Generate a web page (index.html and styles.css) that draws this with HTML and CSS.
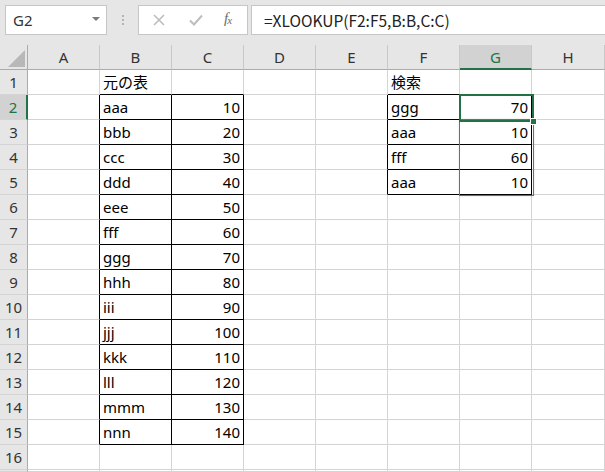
FILE: index.html
```html
<!DOCTYPE html>
<html lang="ja">
<head>
<meta charset="utf-8">
<link rel="stylesheet" href="styles.css">
</head>
<body>
<div class="app">
  <div class="toolbar">
    <div class="namebox"><span class="nb-text">G2</span><span class="nb-arrow"></span></div>
    <div class="dots"><i></i><i></i><i></i></div>
    <div class="btns">
      <svg class="ico-x" width="12" height="12" viewBox="0 0 12 12"><path d="M1 1L11 11M11 1L1 11" stroke="#bdbdbd" stroke-width="1.6" fill="none"/></svg>
      <svg class="ico-ok" width="14" height="12" viewBox="0 0 14 12"><path d="M1 6.5L5 10.5L13 1.5" stroke="#bdbdbd" stroke-width="2" fill="none"/></svg>
      <span class="fx">f<sub>x</sub></span>
    </div>
    <div class="formula">=XLOOKUP(F2:F5,B:B,C:C)</div>
  </div>
  <div class="sheet">
    <div class="grid">
      <div class="ch corner"></div><div class="ch">A</div><div class="ch">B</div><div class="ch">C</div><div class="ch">D</div><div class="ch">E</div><div class="ch">F</div><div class="ch sel">G</div><div class="ch">H</div>

      <div class="rh">1</div><div class="c"></div><div class="c kb">元の表</div><div class="c kb"></div><div class="c"></div><div class="c"></div><div class="c kb">検索</div><div class="c kb"></div><div class="c"></div>
      <div class="rh sel">2</div><div class="c kr"></div><div class="c k">aaa</div><div class="c k n">10</div><div class="c"></div><div class="c kr"></div><div class="c k">ggg</div><div class="c k n">70</div><div class="c"></div>
      <div class="rh">3</div><div class="c kr"></div><div class="c k">bbb</div><div class="c k n">20</div><div class="c"></div><div class="c kr"></div><div class="c k">aaa</div><div class="c k n">10</div><div class="c"></div>
      <div class="rh">4</div><div class="c kr"></div><div class="c k">ccc</div><div class="c k n">30</div><div class="c"></div><div class="c kr"></div><div class="c k">fff</div><div class="c k n">60</div><div class="c"></div>
      <div class="rh">5</div><div class="c kr"></div><div class="c k">ddd</div><div class="c k n">40</div><div class="c"></div><div class="c kr"></div><div class="c k">aaa</div><div class="c k n">10</div><div class="c"></div>
      <div class="rh">6</div><div class="c kr"></div><div class="c k">eee</div><div class="c k n">50</div><div class="c"></div><div class="c"></div><div class="c"></div><div class="c"></div><div class="c"></div>
      <div class="rh">7</div><div class="c kr"></div><div class="c k">fff</div><div class="c k n">60</div><div class="c"></div><div class="c"></div><div class="c"></div><div class="c"></div><div class="c"></div>
      <div class="rh">8</div><div class="c kr"></div><div class="c k">ggg</div><div class="c k n">70</div><div class="c"></div><div class="c"></div><div class="c"></div><div class="c"></div><div class="c"></div>
      <div class="rh">9</div><div class="c kr"></div><div class="c k">hhh</div><div class="c k n">80</div><div class="c"></div><div class="c"></div><div class="c"></div><div class="c"></div><div class="c"></div>
      <div class="rh">10</div><div class="c kr"></div><div class="c k">iii</div><div class="c k n">90</div><div class="c"></div><div class="c"></div><div class="c"></div><div class="c"></div><div class="c"></div>
      <div class="rh">11</div><div class="c kr"></div><div class="c k">jjj</div><div class="c k n">100</div><div class="c"></div><div class="c"></div><div class="c"></div><div class="c"></div><div class="c"></div>
      <div class="rh">12</div><div class="c kr"></div><div class="c k">kkk</div><div class="c k n">110</div><div class="c"></div><div class="c"></div><div class="c"></div><div class="c"></div><div class="c"></div>
      <div class="rh">13</div><div class="c kr"></div><div class="c k">lll</div><div class="c k n">120</div><div class="c"></div><div class="c"></div><div class="c"></div><div class="c"></div><div class="c"></div>
      <div class="rh">14</div><div class="c kr"></div><div class="c k">mmm</div><div class="c k n">130</div><div class="c"></div><div class="c"></div><div class="c"></div><div class="c"></div><div class="c"></div>
      <div class="rh">15</div><div class="c kr"></div><div class="c k">nnn</div><div class="c k n">140</div><div class="c"></div><div class="c"></div><div class="c"></div><div class="c"></div><div class="c"></div>
      <div class="rh">16</div><div class="c"></div><div class="c"></div><div class="c"></div><div class="c"></div><div class="c"></div><div class="c"></div><div class="c"></div><div class="c"></div>
      <div class="rh"></div><div class="c"></div><div class="c"></div><div class="c"></div><div class="c"></div><div class="c"></div><div class="c"></div><div class="c"></div><div class="c"></div>
    </div>
    <div class="range"></div>
    <div class="active"></div>
    <div class="handle"></div>
  </div>
</div>
</body>
</html>
```
FILE: styles.css
```css
html, body {
  margin: 0;
  padding: 0;
  background: #e6e6e6;
  overflow: hidden;
}
.app {
  width: 605px;
  height: 472px;
  font-family: "Noto Sans", "Noto Sans CJK JP", sans-serif;
  color: #000;
}
.toolbar {
  height: 45px;
  box-sizing: border-box;
  padding: 5px 0 0 5px;
  display: flex;
  align-items: flex-start;
  background: #e6e6e6;
}
.namebox {
  width: 102px;
  height: 30px;
  box-sizing: border-box;
  background: #fff;
  border: 1px solid #c6c6c6;
  display: flex;
  align-items: center;
  justify-content: space-between;
  padding: 0 6px 0 7px;
}
.nb-text {
  font-size: 15px;
  color: #333;
  line-height: 1;
}
.nb-arrow {
  width: 0;
  height: 0;
  border-left: 4px solid transparent;
  border-right: 4px solid transparent;
  border-top: 4px solid #7a7a7a;
  margin-top: -2px;
}
.dots {
  width: 31px;
  height: 30px;
  display: flex;
  flex-direction: column;
  align-items: center;
  justify-content: center;
  gap: 2px;
}
.dots i {
  display: block;
  width: 2px;
  height: 2px;
  background: #b4b4b4;
}
.btns {
  width: 110px;
  height: 30px;
  box-sizing: border-box;
  background: #fff;
  border: 1px solid #c6c6c6;
  display: flex;
  align-items: center;
  padding-left: 14px;
}
.ico-x { margin-right: 24px; }
.ico-ok { margin-right: 21px; }
.fx {
  font-family: "Liberation Serif", "DejaVu Serif", serif;
  font-style: italic;
  font-size: 15px;
  color: #6b6b6b;
  line-height: 1;
  margin-top: -3px;
}
.fx sub {
  font-size: 11px;
  vertical-align: baseline;
  position: relative;
  top: 1px;
  margin-left: -1px;
}
.formula {
  margin-left: 3px;
  flex: 1;
  height: 30px;
  box-sizing: border-box;
  background: #fff;
  border: 1px solid #c6c6c6;
  border-right: none;
  display: flex;
  align-items: center;
  padding-left: 12px;
  font-family: "Noto Sans CJK JP", "Noto Sans", sans-serif;
  font-size: 15.5px;
  color: #222;
}
.sheet {
  position: relative;
  background: #fff;
}
.grid {
  display: grid;
  grid-template-columns: 28px repeat(7, 72px) 73px;
  grid-template-rows: repeat(17, 25px) 2px;
  font-size: 15px;
}
.ch {
  background: #e6e6e6;
  border-right: 1px solid #c8c8c8;
  border-bottom: 1px solid #ababab;
  box-sizing: border-box;
  display: flex;
  align-items: center;
  justify-content: center;
  color: #333;
  font-size: 15px;
}
.ch.sel {
  background: #d2d2d2;
  color: #217346;
  border-bottom: 2px solid #217346;
}
.corner {
  position: relative;
  border-right: 1px solid #ababab;
}
.corner::after {
  content: "";
  position: absolute;
  left: 8px;
  top: 5px;
  width: 17px;
  height: 17px;
  background: #b8b8b8;
  clip-path: polygon(100% 0, 100% 100%, 0 100%);
}
.rh {
  background: #e6e6e6;
  border-right: 1px solid #ababab;
  border-bottom: 1px solid #d4d4d4;
  box-sizing: border-box;
  display: flex;
  align-items: center;
  justify-content: center;
  color: #333;
  font-size: 15px;
}
.rh.sel {
  background: #d2d2d2;
  color: #217346;
  border-right: 2px solid #217346;
}
.c {
  border-right: 1px solid #d4d4d4;
  border-bottom: 1px solid #d4d4d4;
  box-sizing: border-box;
  display: flex;
  align-items: center;
  padding: 0 3px 0 3px;
  white-space: nowrap;
  overflow: hidden;
  line-height: 1;
}
.c.n { justify-content: flex-end; }
.c.k { border-right-color: #000; border-bottom-color: #000; }
.c.kr { border-right-color: #000; }
.c.kb { border-bottom-color: #000; }
.range {
  position: absolute;
  left: 459px;
  top: 74px;
  width: 75px;
  height: 77px;
  box-sizing: border-box;
  border: 1px solid #3a74d8;
  box-shadow: 0 0 2px rgba(0, 0, 0, 0.12);
}
.active {
  position: absolute;
  left: 459px;
  top: 49px;
  width: 75px;
  height: 28px;
  box-sizing: border-box;
  border: 2px solid #217346;
}
.handle {
  position: absolute;
  left: 530px;
  top: 73px;
  width: 7px;
  height: 7px;
  box-sizing: border-box;
  background: #217346;
  border: 1px solid #fff;
}
```
